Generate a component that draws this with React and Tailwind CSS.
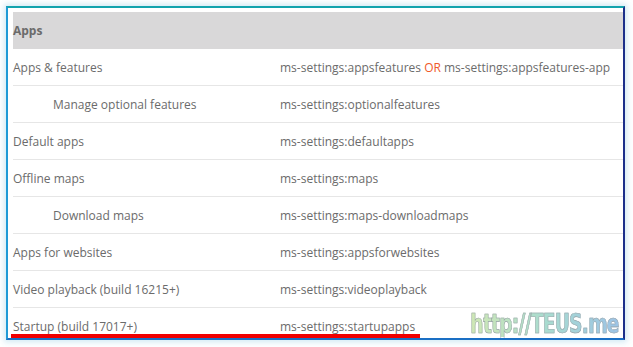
const rows = [
  { name: "Apps & features", uri: "appsfeatures", alt: "appsfeatures-app" },
  { name: "Manage optional features", uri: "optionalfeatures", sub: true },
  { name: "Default apps", uri: "defaultapps" },
  { name: "Offline maps", uri: "maps" },
  { name: "Download maps", uri: "maps-downloadmaps", sub: true },
  { name: "Apps for websites", uri: "appsforwebsites" },
  { name: "Video playback (build 16215+)", uri: "videoplayback" },
  { name: "Startup (build 17017+)", uri: "startupapps" },
];

const App = () => {
  return (
    <div className="w-[633px] h-[347px] bg-white pl-[6px] pt-[6px] font-['Open_Sans',sans-serif] text-[#6b6b6b]">
      <div className="relative w-[619px] h-[334px] overflow-hidden bg-white border-t-2 border-t-[#12a3ad] border-l-2 border-l-[#1f9ad6] border-r-2 border-r-[#1c2f8a] border-b-2 border-b-[#1a6fc4] shadow-[0_0_6px_2px_rgba(120,190,220,0.35)] pl-[5px] pt-[4px]">
        <div className="absolute top-[-2px] right-0 w-[11px] h-[2px] bg-[#1c2f8a]" />
        <div className="flex h-[37px] items-center bg-[#d9d8d9] text-[12px] font-bold pt-[1px]">
          <span>Apps</span>
        </div>
        {rows.map((r) => (
          <div key={r.name} className="flex h-[37px] items-center border-b border-[#e6e6e6] text-[12px] whitespace-nowrap pt-[2px]">
            <div className={`w-[267px] shrink-0 ${r.sub ? "pl-[40px]" : ""}`}>{r.name}</div>
            <div>
              ms-settings:{r.uri}
              {r.alt && (
                <>
                  {" "}
                  <span className="text-[#f0592b]">OR</span> ms-settings:{r.alt}
                </>
              )}
            </div>
          </div>
        ))}
        <div className="absolute left-[3px] top-[326px] w-[409px] h-[4px] bg-[#f00000]" />
        <div className="absolute right-[4px] top-[302px] origin-right scale-x-[0.77] font-['DejaVu_Sans_Condensed','DejaVu_Sans',sans-serif] font-bold text-[27px] leading-none tracking-[-1px] bg-gradient-to-r from-[#cfe8b4] via-[#a9dccf] to-[#9cc3e6] bg-clip-text text-transparent [-webkit-text-stroke:0.6px_#9aa3a8]">
          http://TEUS.me
        </div>
      </div>
    </div>
  );
};

export default App;
